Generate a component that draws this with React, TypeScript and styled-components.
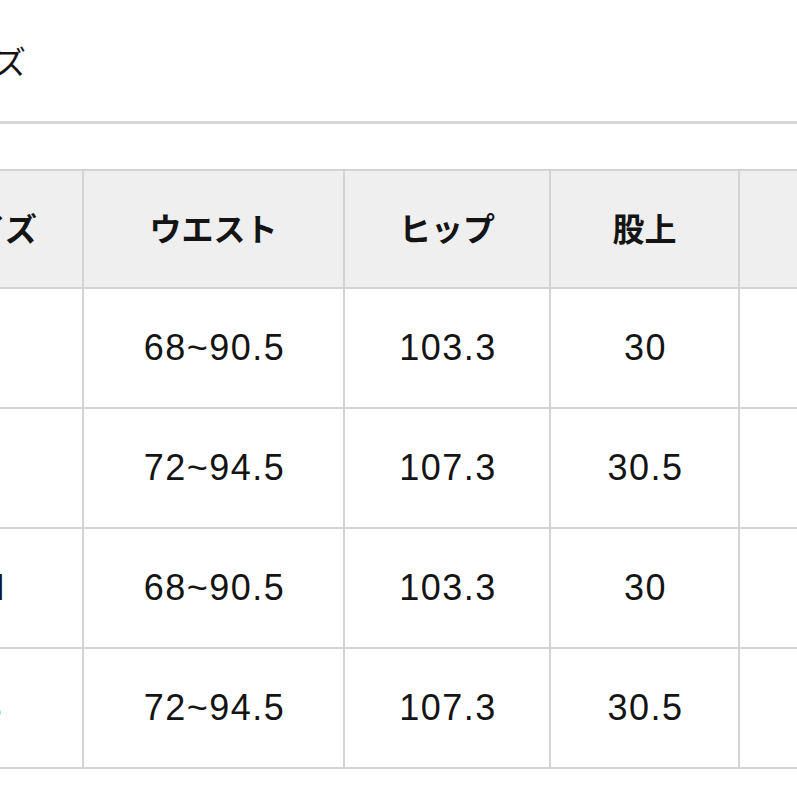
import React from "react";
import styled, { createGlobalStyle } from "styled-components";

const GlobalStyle = createGlobalStyle`
  html, body {
    margin: 0;
    padding: 0;
    background: #ffffff;
    overflow: hidden;
  }
  body {
    font-family: "Liberation Sans", "Noto Sans CJK JP", sans-serif;
    color: #141414;
  }
`;

const Page = styled.div`
  width: 1100px;
  margin-left: -105px;
  display: flex;
  flex-direction: column;
`;

const Title = styled.h2`
  margin: 0;
  height: 121px;
  display: flex;
  align-items: center;
  padding-left: 36px;
  padding-bottom: 2px;
  box-sizing: border-box;
  font-family: "Noto Sans CJK JP", sans-serif;
  font-weight: 400;
  font-size: 32px;
`;

const Rule = styled.hr`
  margin: 0;
  border: none;
  border-top: 3px solid #d6d6d6;
  width: 100%;
`;

const Table = styled.table`
  margin-top: 45px;
  border-collapse: collapse;
  table-layout: fixed;
  width: 1035px;
`;

const HeadCell = styled.th<{ $w: number }>`
  width: ${(p) => p.$w}px;
  height: 111px;
  background: #efefef;
  border: 2px solid #d3d3d3;
  font-family: "Noto Sans CJK JP", sans-serif;
  font-weight: 700;
  font-size: 32px;
  text-align: center;
  padding: 0 0 5px;
`;

const Cell = styled.td`
  height: 118px;
  border: 2px solid #d3d3d3;
  font-family: "Liberation Sans", sans-serif;
  font-size: 36px;
  letter-spacing: 1.5px;
  text-align: center;
  padding: 0 0 0 2px;
  white-space: nowrap;
`;

const columns = [
  { label: "サイズ", w: 185 },
  { label: "ウエスト", w: 259 },
  { label: "ヒップ", w: 204 },
  { label: "股上", w: 187 },
  { label: "股下", w: 200 },
];

const rows = [
  ["L", "68~90.5", "103.3", "30", "72"],
  ["L", "72~94.5", "107.3", "30.5", "73"],
  ["M", "68~90.5", "103.3", "30", "72"],
  ["S", "72~94.5", "107.3", "30.5", "73"],
];

export default function App() {
  return (
    <>
      <GlobalStyle />
      <Page>
        <Title>サイズ</Title>
        <Rule />
        <Table>
          <thead>
            <tr>
              {columns.map((c) => (
                <HeadCell key={c.label} $w={c.w}>
                  {c.label}
                </HeadCell>
              ))}
            </tr>
          </thead>
          <tbody>
            {rows.map((r, i) => (
              <tr key={i}>
                {r.map((v, j) => (
                  <Cell key={j}>{v}</Cell>
                ))}
              </tr>
            ))}
          </tbody>
        </Table>
      </Page>
    </>
  );
}
